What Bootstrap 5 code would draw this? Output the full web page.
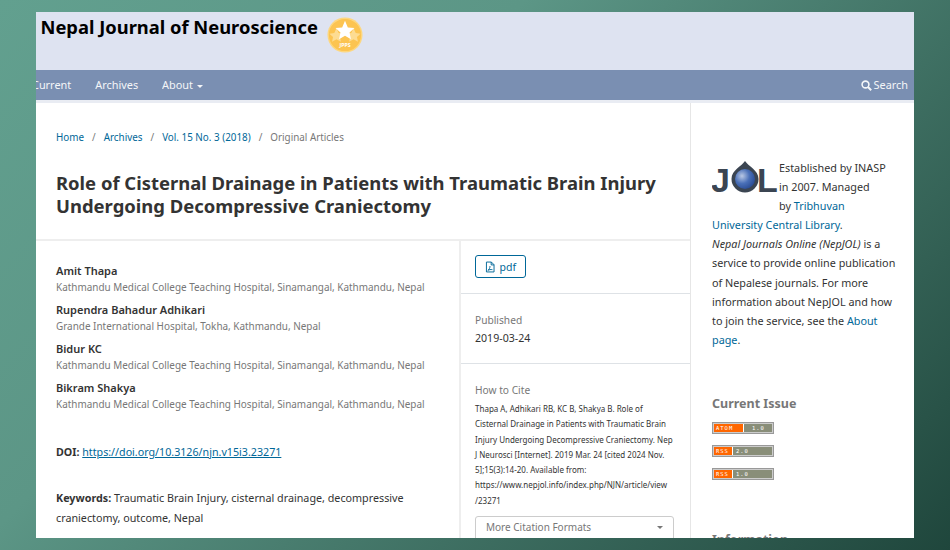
<!DOCTYPE html>
<html lang="en">
<head>
    <meta charset="UTF-8">
    <title>Role of Cisternal Drainage - Nepal Journal of Neuroscience</title>
    <link href="https://cdn.jsdelivr.net/npm/bootstrap@5.3.0/dist/css/bootstrap.min.css" rel="stylesheet">
    <style>
        html, body { height: 550px; overflow: hidden; }
        body {
            font-family: "Noto Sans", sans-serif;
            font-size: 10.8px;
            line-height: 19.1px;
            color: #333;
            background: linear-gradient(135deg, #62a08f 0%, #5c9686 35%, #1f463c 100%);
        }
        a { color: #006798; text-decoration: none; }
        .site-frame { margin: 12px 36px 0; height: 526px; overflow: hidden; background: #fff; }
        .site-head { height: 58px; background: #dee3f1; padding: 3px 4.500px; }
        .site-name { font-size: 18.35px; line-height: 23px; font-weight: 700; color: #000; }
        .site-logo { margin: 2px 0 0 9px; }
        .site-nav { height: 33px; background: #7a8fb2; border-bottom: 3px solid #e9ecf3; padding: 0 6px 0 0; }
        .site-nav a { color: #fff; font-size: 10.9px; line-height: 30px; opacity: .92; }
        .nav-items { margin-left: -4px; gap: 24px; }
        .caret-down { display: inline-block; margin-left: 1px; vertical-align: middle; border-top: 3px solid #fff; border-left: 3px solid transparent; border-right: 3px solid transparent; }
        .main-col { width: 655px; flex: none; border-right: 1px solid #e6e6e6; }
        .crumbs { padding: 25px 20px 0; height: 46px; }
        .crumbs .breadcrumb { font-size: 9.85px; line-height: 18px; --bs-breadcrumb-divider-color: #777; --bs-breadcrumb-item-padding-x: 8px; --bs-breadcrumb-margin-bottom: 0; }
        .crumbs .breadcrumb-item.active { color: #777; }
        .art-title { font-size: 18.45px; line-height: 23px; font-weight: 700; color: #333; margin: 0; padding: 22px 20px 22px; border-bottom: 2px solid #eee; }
        .art-left { width: 423px; flex: none; padding: 22px 20px 0; font-size: 10.7px; }
        .art-right { width: 231px; flex: none; border-left: 2px solid #eee; }
        .auth-item { margin-bottom: 7px; }
        .auth-name { font-size: 11px; line-height: 16px; font-weight: 600; display: block; }
        .auth-aff { font-size: 9.93px; line-height: 16px; color: #777; display: block; }
        .doi-line { margin-top: 31px; }
        .doi-line a { text-decoration: underline; }
        .kw-line { margin-top: 26px; line-height: 20px; font-size: 10.75px; }
        .side-block { padding: 14px 14px 0; }
        .pdf-btn { font-size: 10.5px; line-height: 16px; padding: 2px 9px; border: 1px solid #006798; border-radius: 3px; color: #006798; width: 51px; height: 23px; white-space: nowrap; }
        .meta-label { font-size: 10.2px; color: #777; line-height: 16px; }
        .meta-value { font-size: 10.6px; line-height: 20px; }
        .cite-text { font-size: 8px; line-height: 15.3px; margin-top: 3px; }
        .cite-toggle { font-size: 10px; line-height: 16px; color: #777; border: 1px solid #ccc; border-radius: 3px; padding: 2px 10px; width: 199px; height: 28px; margin-top: 8px; }
        .cite-toggle .caret-down { margin-top: 7px; border-top-color: #777; }
        .side-col { flex: 1; padding: 0 18px 0 21px; }
        .about-block { padding-top: 55px; }
        .jol-logo { float: left; width: 67px; height: 57px; display: block; }
        .block-title { font-size: 12.5px; line-height: 18px; font-weight: 700; color: #777; margin: 0; }
        .feed-tag { width: 62px; height: 12px; display: flex; border: 1px solid #999; background: #ccc; padding: 1px; margin-bottom: 11px; font-family: "DejaVu Sans Mono", monospace; font-size: 5.5px; line-height: 8px; letter-spacing: 1px; color: #fff; }
        .feed-name { background: #f60; padding-left: 2px; border-right: 1px solid #fff; }
        .feed-ver { background: #898e79; flex: 1; padding-left: 3px; }
    </style>
</head>
<body>
<div class="site-frame">
    <header class="site-head d-flex align-items-start">
        <div class="site-name">Nepal Journal of Neuroscience</div>
        <svg class="site-logo" width="36" height="36" viewBox="0 0 38 38">
            <circle cx="19" cy="19" r="18.5" fill="#fdd77f"/>
            <circle cx="19" cy="19" r="17" fill="#fcc451"/>
            <polygon fill="#fddc92" points="10,11 12.3,16 17.5,16.6 13.6,20 14.7,25 10,22.5 5.3,25 6.4,20 2.5,16.6 7.7,16" transform="translate(0,1)"/>
            <polygon fill="#fddc92" points="28,11 30.3,16 35.5,16.6 31.6,20 32.7,25 28,22.5 23.3,25 24.4,20 20.5,16.6 25.7,16" transform="translate(0,1)"/>
            <polygon fill="#fff" points="19,4 22,11 29,11.7 23.8,16.4 25.3,23.5 19,19.8 12.7,23.5 14.2,16.4 9,11.7 16,11"/>
            <text x="19" y="32" text-anchor="middle" font-family="Noto Sans" font-size="5.5" font-weight="700" fill="#fff">JPPS</text>
        </svg>
    </header>
    <nav class="site-nav d-flex justify-content-between align-items-start overflow-hidden">
        <div class="nav-items d-flex">
            <a href="#">Current</a>
            <a href="#">Archives</a>
            <a href="#">About <span class="caret-down"></span></a>
        </div>
        <a href="#" class="d-flex align-items-center gap-1">
            <svg width="11" height="11" viewBox="0 0 11 11" fill="none" stroke="#fff"><circle cx="4.5" cy="4.5" r="3.4" stroke-width="1.6"/><path d="M7 7l3.2 3.2" stroke-width="2"/></svg>
            <span style="margin-left:-2px">Search</span>
        </a>
    </nav>
    <div class="d-flex">
        <main class="main-col">
            <div class="crumbs">
                <ol class="breadcrumb">
                    <li class="breadcrumb-item"><a href="#">Home</a></li>
                    <li class="breadcrumb-item"><a href="#">Archives</a></li>
                    <li class="breadcrumb-item"><a href="#">Vol. 15 No. 3 (2018)</a></li>
                    <li class="breadcrumb-item active">Original Articles</li>
                </ol>
            </div>
            <h1 class="art-title">Role of Cisternal Drainage in Patients with Traumatic Brain Injury Undergoing Decompressive Craniectomy</h1>
            <div class="d-flex">
                <div class="art-left">
                    <div class="auth-item"><span class="auth-name">Amit Thapa</span><span class="auth-aff">Kathmandu Medical College Teaching Hospital, Sinamangal, Kathmandu, Nepal</span></div>
                    <div class="auth-item"><span class="auth-name">Rupendra Bahadur Adhikari</span><span class="auth-aff">Grande International Hospital, Tokha, Kathmandu, Nepal</span></div>
                    <div class="auth-item"><span class="auth-name">Bidur KC</span><span class="auth-aff">Kathmandu Medical College Teaching Hospital, Sinamangal, Kathmandu, Nepal</span></div>
                    <div class="auth-item"><span class="auth-name">Bikram Shakya</span><span class="auth-aff">Kathmandu Medical College Teaching Hospital, Sinamangal, Kathmandu, Nepal</span></div>
                    <div class="doi-line"><b class="fw-bold">DOI:</b> <a href="#">https://doi.org/10.3126/njn.v15i3.23271</a></div>
                    <div class="kw-line"><b class="fw-bold">Keywords:</b> Traumatic Brain Injury, cisternal drainage, decompressive craniectomy, outcome, Nepal</div>
                </div>
                <div class="art-right">
                    <div class="side-block border-bottom" style="height:53px">
                        <a href="#" class="pdf-btn d-flex align-items-center gap-1">
                            <svg width="11" height="12" viewBox="0 0 11 12" fill="none" stroke="#006798" stroke-width="1"><path d="M1.5.8h5.2l2.8 2.8v7.6h-8z"/><path d="M6.5.8v3h3"/><path d="M3 9.5c1.5-1 2.5-3 2.2-4.5M3 9.5c1.5-.8 3-1 4.8-.7"/></svg>
                            pdf
                        </a>
                    </div>
                    <div class="side-block border-bottom" style="height:70px;padding-top:18px">
                        <div class="meta-label">Published</div>
                        <div class="meta-value">2019-03-24</div>
                    </div>
                    <div class="side-block" style="padding-top:18px">
                        <div class="meta-label">How to Cite</div>
                        <div class="cite-text">Thapa A, Adhikari RB, KC B, Shakya B. Role of Cisternal Drainage in Patients with Traumatic Brain Injury Undergoing Decompressive Craniectomy. Nep J Neurosci [Internet]. 2019 Mar. 24 [cited 2024 Nov. 5];15(3):14-20. Available from: https://www.nepjol.info/index.php/NJN/article/view<br>/23271</div>
                        <div class="cite-toggle d-flex justify-content-between align-items-start">More Citation Formats <span class="caret-down"></span></div>
                    </div>
                </div>
            </div>
        </main>
        <aside class="side-col">
            <div class="about-block">
                <svg class="jol-logo" viewBox="0 0 67 57">
                    <defs><radialGradient id="globe" cx=".35" cy=".35" r=".75"><stop offset="0" stop-color="#b9c8e4"/><stop offset=".5" stop-color="#4a70b8"/><stop offset="1" stop-color="#26478f"/></radialGradient></defs>
                    <text x="-1" y="34" font-family="Liberation Sans" font-size="34" font-weight="700" fill="#3b4552">J</text>
                    <path d="M33 3 C36 8 46.500 12 46.500 21 A13.500 13.500 0 0 1 19.500 21 C19.500 12 30 8 33 3Z" fill="#3b4552"/>
                    <circle cx="33" cy="21" r="10" fill="url(#globe)"/>
                    <text x="45" y="34" font-family="Liberation Sans" font-size="34" font-weight="700" fill="#3b4552">L</text>
                </svg>
                Established by INASP in 2007. Managed<br>by <a href="#">Tribhuvan University Central Library</a>.<br>
                <i>Nepal Journals Online (NepJOL)</i> is a service to provide online publication of Nepalese journals. For more information about NepJOL and how to join the service, see the <a href="#">About page</a>.
            </div>
            <div style="margin-top:46px">
                <h2 class="block-title" style="margin-bottom:9px">Current Issue</h2>
                <div class="feed-tag"><span class="feed-name" style="width:30px">ATOM</span><span class="feed-ver ps-2">1.0</span></div>
                <div class="feed-tag"><span class="feed-name" style="width:19px">RSS</span><span class="feed-ver">2.0</span></div>
                <div class="feed-tag"><span class="feed-name" style="width:19px">RSS</span><span class="feed-ver">1.0</span></div>
            </div>
            <h2 class="block-title" style="margin-top:51px">Information</h2>
        </aside>
    </div>
</div>
<script src="https://cdn.jsdelivr.net/npm/bootstrap@5.3.0/dist/js/bootstrap.bundle.min.js"></script>
</body>
</html>
